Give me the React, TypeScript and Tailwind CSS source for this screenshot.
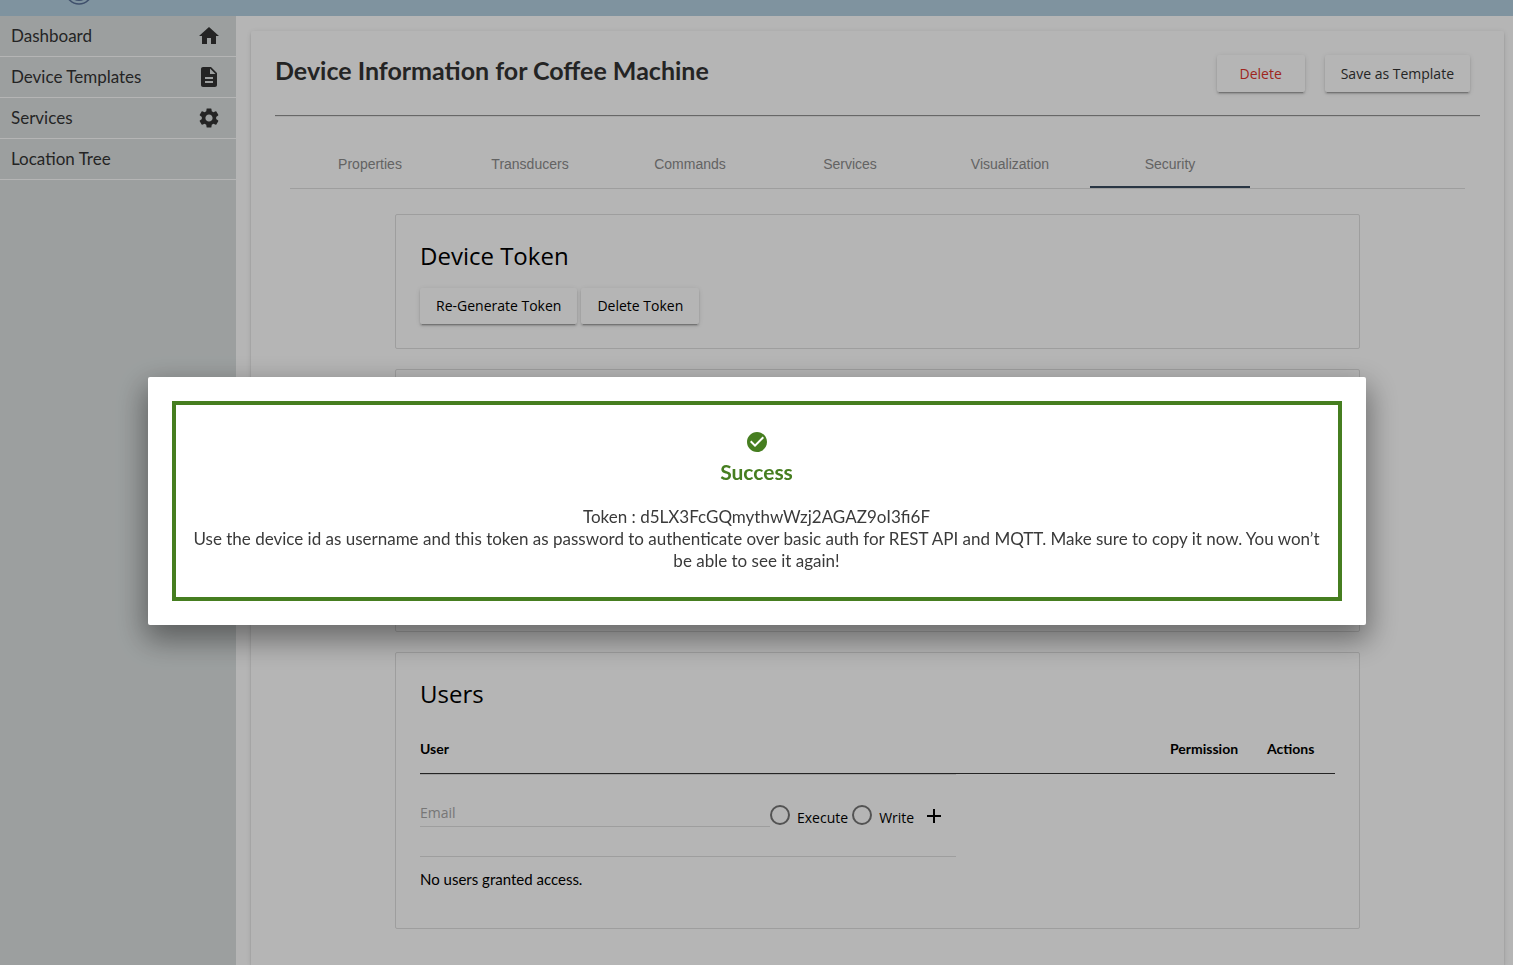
import type { ReactNode } from "react";
import {
  MdAdd,
  MdCheckCircle,
  MdDescription,
  MdHome,
  MdSettings,
} from "react-icons/md";

const navItems: { label: string; icon?: ReactNode }[] = [
  { label: "Dashboard", icon: <MdHome size={24} /> },
  { label: "Device Templates", icon: <MdDescription size={24} /> },
  { label: "Services", icon: <MdSettings size={24} /> },
  { label: "Location Tree" },
];

const tabs = [
  "Properties",
  "Transducers",
  "Commands",
  "Services",
  "Visualization",
  "Security",
];

function RaisedButton({
  children,
  className = "",
}: {
  children: ReactNode;
  className?: string;
}) {
  return (
    <button
      type="button"
      className={`min-w-[88px] rounded-xs bg-white px-4 font-['Open_Sans',sans-serif] text-sm leading-9 shadow-[0_3px_1px_-2px_rgba(0,0,0,0.2),0_2px_2px_0_rgba(0,0,0,0.14),0_1px_5px_0_rgba(0,0,0,0.12)] ${className}`}
    >
      {children}
    </button>
  );
}

function Panel({
  children,
  className = "",
}: {
  children?: ReactNode;
  className?: string;
}) {
  return (
    <section
      className={`rounded-xs border border-[#dfdfdf] p-6 ${className}`}
    >
      {children}
    </section>
  );
}

function PanelTitle({ children }: { children: ReactNode }) {
  return (
    <h2 className="mb-[15px] font-['Open_Sans',sans-serif] text-2xl leading-[34px] text-black">
      {children}
    </h2>
  );
}

function PermissionRadio({ label }: { label: string }) {
  return (
    <label className="flex items-center gap-[7px] font-['Open_Sans',sans-serif] text-sm text-black">
      <input
        type="radio"
        name="permission"
        className="size-5 appearance-none rounded-full border-2 border-[#757575]"
      />
      <span className="pt-1.5">{label}</span>
    </label>
  );
}

function Sidebar() {
  return (
    <nav className="w-[236px] shrink-0 bg-[#dce1e1] text-[#343434]">
      {navItems.map((item) => (
        <a
          key={item.label}
          href="#"
          className="flex h-[41px] items-center justify-between border-b border-white pr-[15px] pl-[11px] text-[17px]"
        >
          {item.label}
          {item.icon}
        </a>
      ))}
    </nav>
  );
}

function UsersTable() {
  return (
    <table className="w-full table-fixed border-collapse text-left text-sm text-black">
      <thead>
        <tr className="h-[47px] border-b border-[#343434]">
          <th className="p-0 font-bold">User</th>
          <th className="w-[97px] p-0 font-bold">Permission</th>
          <th className="w-[68px] p-0 font-bold">Actions</th>
        </tr>
      </thead>
      <tbody>
        <tr>
          <td colSpan={3} className="p-0">
            <form className="flex h-[83px] w-[536px] items-center border-y border-[#dfdfdf]">
              <input
                type="email"
                aria-label="Email"
                placeholder="Email"
                className="mb-1 h-7 w-[350px] border-b border-[#dfdfdf] bg-transparent font-['Open_Sans',sans-serif] text-sm outline-none placeholder:text-[#a8a8a8]"
              />
              <div className="flex gap-1">
                <PermissionRadio label="Execute" />
                <PermissionRadio label="Write" />
              </div>
              <button type="button" aria-label="Add user" className="mt-0.5 ml-2">
                <MdAdd size={24} />
              </button>
            </form>
          </td>
        </tr>
        <tr className="h-[47px]">
          <td colSpan={3} className="p-0 text-[15px]">
            No users granted access.
          </td>
        </tr>
      </tbody>
    </table>
  );
}

function SuccessDialog() {
  return (
    <div className="fixed inset-0 flex items-center justify-center bg-black/29 pt-[37px]">
      <div
        role="dialog"
        aria-labelledby="dialog-title"
        className="w-full max-w-[1218px] rounded-xs bg-white p-6 shadow-[0_12px_30px_3px_rgba(0,0,0,0.42)]"
      >
        <div className="flex flex-col items-center border-4 border-[#467e20] px-4 py-[25px] text-center">
          <MdCheckCircle size={24} className="text-[#467e20]" />
          <h2
            id="dialog-title"
            className="mt-1 mb-5 text-[21px] leading-7 font-bold text-[#467e20]"
          >
            Success
          </h2>
          <p className="text-[17px] leading-[22px] text-[#3a3a3a]">
            Token : d5LX3FcGQmythwWzj2AGAZ9oI3fi6F
            <br />
            Use the device id as username and this token as password to
            authenticate over basic auth for REST API and MQTT. Make sure to
            copy it now. You won’t be able to see it again!
          </p>
        </div>
      </div>
    </div>
  );
}

export default function App() {
  return (
    <div className="flex min-h-screen flex-col bg-white font-[Lato,sans-serif]">
      <header className="h-4 bg-[#b4d0e0]">
        <svg
          width="26"
          height="6"
          viewBox="0 0 26 6"
          fill="none"
          stroke="#5a7199"
          className="ml-[66px]"
        >
          <circle cx="13" cy="-9" r="13" strokeWidth="1.6" />
          <circle cx="13" cy="-9" r="9.4" strokeWidth="1.4" />
        </svg>
      </header>
      <div className="flex flex-1">
        <Sidebar />
        <main className="flex min-w-0 flex-1 pt-[15px] pr-[9px] pl-[15px]">
          <div className="min-w-0 flex-1 rounded-t-xs px-6 pt-6 shadow-[0_3px_1px_-2px_rgba(0,0,0,0.2),0_2px_2px_0_rgba(0,0,0,0.14),0_1px_5px_0_rgba(0,0,0,0.12)]">
            <div className="flex h-[37px] justify-between pr-[10px] text-[#343434]">
              <h1 className="text-[25px] leading-[30px] font-bold">
                Device Information for Coffee Machine
              </h1>
              <div className="flex gap-5">
                <RaisedButton className="text-[#e0352b]">Delete</RaisedButton>
                <RaisedButton>Save as Template</RaisedButton>
              </div>
            </div>
            <hr className="mt-[23px] h-0.5 border-t border-[#929292] bg-[#eeeeee]" />
            <div className="px-[15px] pt-[23px]">
              <div
                role="tablist"
                className="flex border-b border-[#dfdfdf] font-['Liberation_Sans',sans-serif] text-sm text-[#8c8c8c]"
              >
                {tabs.map((tab) => (
                  <button
                    key={tab}
                    type="button"
                    role="tab"
                    aria-selected={tab === "Security"}
                    className="h-12 w-40 border-b-2 border-transparent pt-0.5 aria-selected:border-[#3a4c60]"
                  >
                    {tab}
                  </button>
                ))}
              </div>
              <div className="flex flex-col gap-5 px-[105px] pt-[25px] pb-9">
                <Panel>
                  <PanelTitle>Device Token</PanelTitle>
                  <div className="flex gap-1 text-black">
                    <RaisedButton>Re-Generate Token</RaisedButton>
                    <RaisedButton>Delete Token</RaisedButton>
                  </div>
                </Panel>
                <Panel className="h-[263px]" />
                <Panel>
                  <PanelTitle>Users</PanelTitle>
                  <UsersTable />
                </Panel>
              </div>
            </div>
          </div>
        </main>
      </div>
      <SuccessDialog />
    </div>
  );
}
